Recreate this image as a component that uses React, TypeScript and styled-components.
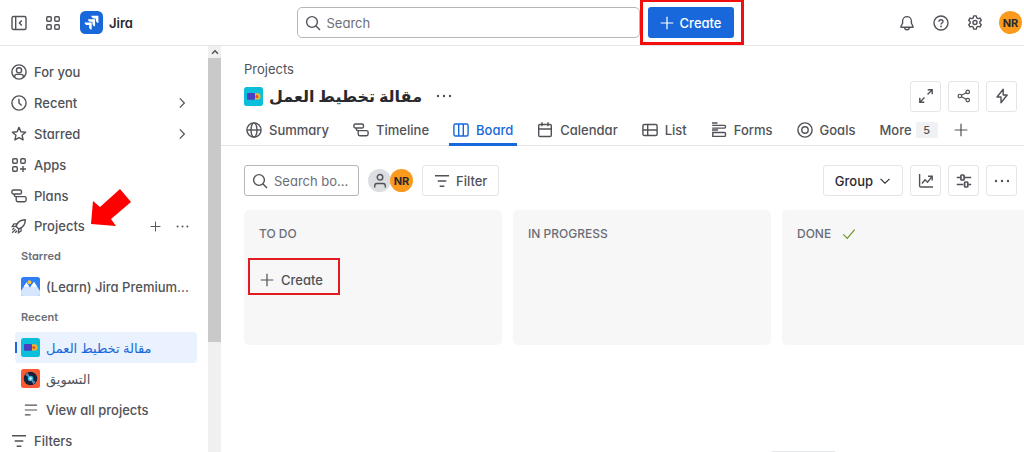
import React from 'react';
import styled, { createGlobalStyle, css } from 'styled-components';

const color = {
  text: '#292a2e',
  subtle: '#505258',
  subtlest: '#6b6e76',
  blue: '#1868db',
  selected: '#e9f2fe',
  border: '#e4e5e8',
  inputBorder: '#b4b6ba',
  sunken: '#f7f7f7',
  orange: '#fb9a1c',
};

const GlobalStyle = createGlobalStyle`
  *, *::before, *::after { box-sizing: border-box; }
  body {
    margin: 0;
    background: #fff;
    color: ${color.subtle};
    font-family: Inter, "Noto Sans", "DejaVu Sans", sans-serif;
    font-feature-settings: "cv11";
    font-size: 13px;
    font-weight: 500;
    line-height: 20px;
  }
  button, input {
    font: inherit;
    font-feature-settings: inherit;
    color: inherit;
  }
  button { cursor: pointer; }
  a { color: inherit; text-decoration: none; }
  ul { list-style: none; margin: 0; padding: 0; }
`;

/* ---------- icons ---------- */

const Glyph = styled.svg<{ $size?: number }>`
  display: block;
  flex: none;
  width: ${(p) => p.$size ?? 16}px;
  height: ${(p) => p.$size ?? 16}px;
  fill: none;
  stroke: currentColor;
  stroke-width: 1.4;
`;

const icons = {
  collapse: (
    <>
      <rect x="1" y="1.5" width="14" height="13" rx="1.5" />
      <path d="M4.700 1.500v13M10.800 5.600 8.400 8l2.400 2.400" />
    </>
  ),
  apps: (
    <>
      <rect x="1.75" y="1.75" width="4.5" height="4.5" rx="1" />
      <rect x="9.75" y="1.75" width="4.5" height="4.5" rx="1" />
      <rect x="1.75" y="9.75" width="4.5" height="4.5" rx="1" />
      <rect x="9.75" y="9.75" width="4.5" height="4.5" rx="1" />
    </>
  ),
  appsAdd: (
    <>
      <rect x="1.75" y="1.75" width="4.5" height="4.5" rx="1" />
      <rect x="9.75" y="1.75" width="4.5" height="4.5" rx="1" />
      <rect x="1.75" y="9.75" width="4.5" height="4.5" rx="1" />
      <path d="M12 9v6M9 12h6" />
    </>
  ),
  search: (
    <>
      <circle cx="7" cy="7" r="5.4" />
      <path d="m11 11 4 4" />
    </>
  ),
  plus: <path d="M8 .8v14.400M.8 8h14.400" />,
  bell: (
    <>
      <path d="M3.6 8.2V6a4.4 4.4 0 0 1 8.8 0v2.2l1.6 3.1v.9H2v-.9z" strokeLinejoin="round" />
      <path d="M5.7 12.4a2.3 2.3 0 0 0 4.6 0" />
    </>
  ),
  help: (
    <>
      <circle cx="8" cy="8" r="7" />
      <path d="M6 6.7C6 5.4 6.9 4.7 8 4.7s2 .75 2 1.8c0 1.4-2 1.5-2 3" />
      <circle cx="8" cy="11.4" r=".9" fill="currentColor" stroke="none" />
    </>
  ),
  gear: (
    <>
      <path
        d="M6.700.9h2.600l.45 2 1.300.75 1.950-.6 1.300 2.250-1.450 1.400v1.600l1.450 1.400-1.300 2.250-1.950-.6-1.300.75-.45 2H6.700l-.45-2-1.300-.75-1.950.6-1.300-2.250 1.450-1.400V6.700L1.700 5.300 3 3.050l1.950.6 1.300-.75z"
        strokeLinejoin="round"
      />
      <circle cx="8" cy="7.500" r="2" />
    </>
  ),
  person: (
    <>
      <circle cx="8" cy="8" r="7.1" />
      <circle cx="8" cy="6.3" r="2.6" />
      <path d="M3.7 13.2v-.7c0-1.3.9-2.1 2.1-2.1h4.4c1.2 0 2.1.8 2.1 2.1v.7" />
    </>
  ),
  user: (
    <>
      <circle cx="8" cy="4.3" r="2.8" />
      <path d="M2.7 14.500v-1.800c0-1.300 1-2.200 2.200-2.200h6.200c1.200 0 2.200.9 2.200 2.200v1.800" />
    </>
  ),
  clock: (
    <>
      <circle cx="8" cy="8" r="7.1" />
      <path d="M8 3.7V8l2.6 2.4" />
    </>
  ),
  star: (
    <path
      d="m8 1.4 1.9 4.3 4.7.5-3.5 3.1 1 4.6L8 11.6l-4.100 2.300 1-4.600L1.400 6.200l4.700-.5z"
      strokeLinejoin="round"
    />
  ),
  plans: (
    <>
      <rect x=".9" y="2" width="9.6" height="4" rx="1.6" />
      <path d="M3.3 6v1.100c0 .8.6 1.500 1.500 1.500h8.700c.9 0 1.600.7 1.600 1.600v1.900c0 .9-.7 1.600-1.600 1.600H6.800c-.9 0-1.600-.7-1.600-1.600V8.600" />
    </>
  ),
  rocket: (
    <>
      <path
        d="M5 8.300C6.300 4.400 9 1.700 14.300 1.700c0 5.300-2.700 8-6.600 9.300z"
        strokeLinejoin="round"
      />
      <path
        d="M6.200 5.900H3L1.200 8.600l3.800-.3M10.100 9.800V13l-2.700 1.800.3-3.800M4.600 11.400l-3.400 3.400M3.300 9.900l-2 2M6.100 12.700l-2 2"
        strokeWidth="1.300"
      />
    </>
  ),
  chevronRight: <path d="m5.5 2.7 5.2 5.3-5.200 5.300" />,
  chevronDown: <path d="M2 5.2 8 11l6-5.800" />,
  dots: (
    <g fill="currentColor" stroke="none">
      <circle cx="2" cy="8" r="1.2" />
      <circle cx="8" cy="8" r="1.2" />
      <circle cx="14" cy="8" r="1.2" />
    </g>
  ),
  viewAll: <path d="M1 2.5h14M1 8h14M1 13.500h6.500" />,
  filter: <path d="M1 2.7h14M3.700 8h8.600M5.700 13.300h4.600" />,
  globe: (
    <>
      <circle cx="8" cy="8" r="7.1" />
      <ellipse cx="8" cy="8" rx="3" ry="7.1" />
      <path d="M1 8h14" />
    </>
  ),
  board: (
    <>
      <rect x=".9" y="2" width="14.2" height="12" rx="1.5" />
      <path d="M5.7 2v12M10.300 2v12" />
    </>
  ),
  calendar: (
    <>
      <rect x="1.7" y="2.5" width="12.6" height="12" rx="1.2" />
      <path d="M1.700 7h12.600M5 .3v4M11 .3v4" />
    </>
  ),
  table: (
    <>
      <rect x=".9" y="2.5" width="14.2" height="11" rx="1.3" />
      <path d="M1 8h14M5.700 2.500v11" />
    </>
  ),
  forms: (
    <>
      <path d="M1 1h5.500M1 8h6" />
      <path d="M1.200 3.400h12.300c.6 0 1 .4 1 1v.7c0 .6-.4 1-1 1H1.200" />
      <path d="M1.800 10.500h11.700c.6 0 1 .4 1 1v1.900c0 .6-.4 1-1 1H1.800z" />
    </>
  ),
  goals: (
    <>
      <circle cx="8" cy="8" r="7.1" />
      <circle cx="8" cy="8" r="3.2" />
    </>
  ),
  expand: (
    <path d="M9.500 6.500 14 2M9.700 1.800h4.500v4.500M6.500 9.500 2 14M1.800 9.700v4.500h4.500" />
  ),
  share: (
    <>
      <circle cx="3.3" cy="8" r="2" />
      <circle cx="12.3" cy="3.4" r="2" />
      <circle cx="12.3" cy="12.6" r="2" />
      <path d="m5.100 7.100 5.400-2.800M5.100 8.900l5.400 2.800" />
    </>
  ),
  bolt: (
    <path
      d="M9.200 1.300 3 9h4v5.700L13.200 7h-4z"
      strokeLinejoin="round"
    />
  ),
  chart: (
    <path d="M1.600 1v11.700c0 .8.500 1.300 1.300 1.300H15M4 10.500l3-3.700 2.600 2.400 4.200-5.600M10 3.200h4.200v4.200" />
  ),
  sliders: (
    <g strokeWidth="1.700">
      <path d="M.8 4.500h3.500M9 4.500h6.200M.8 11.500h6.500M12.200 11.500h3" />
      <rect x="4.900" y="2" width="3.200" height="5" rx=".8" />
      <rect x="8.600" y="9" width="3.200" height="5" rx=".8" />
    </g>
  ),
  check: <path d="M1.500 8.500 6 13 14.500 3" />,
};

function Icon({ name, size }: { name: keyof typeof icons; size?: number }) {
  return (
    <Glyph viewBox="0 0 16 16" $size={size} aria-hidden="true">
      {icons[name]}
    </Glyph>
  );
}

const Picture = styled.svg<{ $size: number }>`
  display: block;
  flex: none;
  width: ${(p) => p.$size}px;
  height: ${(p) => p.$size}px;
`;

const JiraLogo = () => (
  <Picture $size={23} viewBox="0 0 24 24" aria-hidden="true">
    <rect width="24" height="24" rx="5.5" fill={color.blue} />
    <g fill="#fff">
      <path d="M11.800 5h7.400v7.400c-1.500 0-2.700-1.200-2.700-2.700V7.700h-2c-1.500 0-2.700-1.200-2.700-2.700z" />
      <path d="M8.300 8.500h7.400v7.400c-1.500 0-2.700-1.200-2.700-2.700v-2h-2c-1.500 0-2.700-1.200-2.700-2.700z" />
      <path d="M4.800 12h7.400v7.400c-1.500 0-2.700-1.200-2.700-2.700v-2h-2c-1.500 0-2.700-1.200-2.700-2.700z" />
    </g>
  </Picture>
);

const WalletAvatar = () => (
  <Picture $size={19} viewBox="0 0 19 19" aria-hidden="true">
    <rect width="19" height="19" rx="2.5" fill="#0bbfda" />
    <path d="M10 6.300h3.500a3 3 0 0 1 3 3 3 3 0 0 1-3 3.200H10z" fill="#f7b32b" />
    <rect x="3" y="6" width="8" height="6.700" rx=".8" fill="#4a3fc0" />
    <circle cx="12.900" cy="9.400" r="1.500" fill="#d9532c" />
  </Picture>
);

const RecordAvatar = () => (
  <Picture $size={19} viewBox="0 0 19 19" aria-hidden="true">
    <rect width="19" height="19" rx="2.5" fill="#fb5a35" />
    <circle cx="9.5" cy="9.5" r="6.8" fill="#14213a" />
    <path d="M9.500 9.500 4.300 6a6.300 6.300 0 0 1 2.500-2.200zM9.500 9.500l5.200 3.500a6.300 6.300 0 0 1-2.500 2.200z" fill="#5f8bb0" />
    <circle cx="9.5" cy="9.5" r="2.8" fill="#29b6e0" />
    <circle cx="9.5" cy="9.5" r="1.200" fill="#fff" />
  </Picture>
);

const MountainAvatar = () => (
  <Picture $size={19} viewBox="0 0 19 19" aria-hidden="true">
    <rect width="19" height="19" rx="2.5" fill="#2f80f5" />
    <circle cx="8.5" cy="5.2" r="1.9" fill="#ffc83d" />
    <path d="M0 14 5.500 5.500l3.300 5 4.200-5.500 6 9v2.500a2.500 2.500 0 0 1-2.500 2.500h-14A2.500 2.500 0 0 1 0 16.500z" fill="#d6e6fe" />
    <path d="m5.500 5.500 2.300 3.500-1.300 1-1.200-1-1.700 1-.6-.7zM13 5l2.800 4.200-1.400.9-1.500-1-1.400 1.100-1.300-1.300z" fill="#fff" />
  </Picture>
);

const Arrow = styled.svg`
  position: absolute;
  left: 80px;
  top: -22px;
  width: 40px;
  height: 38px;
  fill: #fe0000;
`;

/* ---------- shared controls ---------- */

const IconButton = styled.button<{ $boxed?: boolean; $small?: boolean }>`
  display: flex;
  align-items: center;
  justify-content: center;
  flex: none;
  width: ${(p) => (p.$small ? 24 : p.$boxed ? 31 : 30)}px;
  height: ${(p) => (p.$small ? 24 : p.$boxed ? 31 : 30)}px;
  padding: 0;
  border: ${(p) => (p.$boxed ? `1px solid ${color.border}` : '0')};
  border-radius: 3px;
  background: none;
`;

const LabelButton = styled.button<{ $strong?: boolean }>`
  display: flex;
  align-items: center;
  gap: 6px;
  height: 31px;
  padding: 0 11px;
  border: 1px solid ${color.border};
  border-radius: 3px;
  background: none;
  color: ${(p) => (p.$strong ? color.text : color.subtle)};
`;

const Avatar = styled.span<{ $empty?: boolean }>`
  display: flex;
  align-items: center;
  justify-content: center;
  flex: none;
  width: 23px;
  height: 23px;
  border-radius: 50%;
  background: ${(p) => (p.$empty ? '#dddee1' : color.orange)};
  color: ${(p) => (p.$empty ? color.subtle : color.text)};
  font-size: 11px;
  font-weight: 700;
`;

const Highlight = styled.div<{ $header?: boolean }>`
  position: absolute;
  pointer-events: none;
  ${(p) =>
    p.$header
      ? css`
          inset: -8px -10px -7px -8px;
          border: 3px solid #f20d0d;
        `
      : css`
          inset: -6px -17px 0 -12px;
          border: 2px solid #e01b22;
        `}
`;

/* ---------- header ---------- */

const Page = styled.div`
  display: flex;
  flex-direction: column;
  height: 100vh;
  overflow: hidden;
`;

const Header = styled.header`
  display: flex;
  align-items: center;
  flex: none;
  height: 46px;
  padding: 0 2px 0 4px;
  border-bottom: 1px solid ${color.border};
`;

const HeaderSide = styled.div<{ $end?: boolean }>`
  display: flex;
  align-items: center;
  flex: 1;
  gap: 4px;
  justify-content: ${(p) => (p.$end ? 'flex-end' : 'flex-start')};
`;

const Brand = styled.a`
  display: flex;
  align-items: center;
  gap: 6px;
  margin-left: 8px;
  color: ${color.text};
  font-weight: 600;
`;

const AccountButton = styled.button`
  margin-left: 5px;
  padding: 0;
  border: 0;
  background: none;
`;

const HeaderCenter = styled.div`
  display: flex;
  align-items: center;
  gap: 8px;
  flex: 0 1 437px;
  margin-left: 4px;
`;

const SearchBox = styled.label<{ $compact?: boolean }>`
  display: flex;
  align-items: center;
  gap: 6px;
  flex: ${(p) => (p.$compact ? '0 0 115px' : '1')};
  min-width: 0;
  height: 31px;
  padding: 0 7px;
  border: 1px solid ${color.inputBorder};
  border-radius: ${(p) => (p.$compact ? 3 : 5)}px;

  input {
    flex: 1;
    min-width: 0;
    padding: 0;
    border: 0;
    outline: 0;
    background: none;
    font-weight: 400;
  }
  input::placeholder {
    color: ${color.subtlest};
    opacity: 1;
  }
`;

const CreateWrap = styled.div`
  position: relative;
  flex: none;
`;

const CreateButton = styled.button`
  display: flex;
  align-items: center;
  gap: 6px;
  height: 31px;
  padding: 0 12px;
  border: 0;
  border-radius: 3px;
  background: ${color.blue};
  color: #fff;
`;

/* ---------- sidebar ---------- */

const Body = styled.div`
  display: flex;
  flex: 1;
  min-height: 0;
`;

const Sidebar = styled.nav`
  flex: 0 0 208px;
  padding: 10px 11px 0;
  overflow: hidden;
`;

const NavRow = styled.li<{ $short?: boolean }>`
  position: relative;
  display: flex;
  align-items: center;
  height: ${(p) => (p.$short ? 30 : 31)}px;
  padding-right: 3px;
`;

const NavLink = styled.a`
  display: flex;
  align-items: center;
  flex: 1;
  gap: 7px;
`;

const RowActions = styled.div`
  display: flex;
  gap: 3px;
`;

const SubHeading = styled.h2`
  margin: 0;
  padding-left: 10px;
  font-size: 11px;
  font-weight: 600;
  line-height: 30px;
  color: ${color.subtlest};
`;

const SubRow = styled.li<{ $selected?: boolean }>`
  position: relative;
  display: flex;
  align-items: center;
  height: 31px;
  margin-left: 4px;
  padding-left: 6px;
  border-radius: 4px;
  ${(p) =>
    p.$selected &&
    css`
      background: ${color.selected};
      color: ${color.blue};
      &::before {
        content: '';
        position: absolute;
        left: 0;
        top: 10px;
        width: 2px;
        height: 11px;
        background: ${color.blue};
      }
    `}
`;

const SubLink = styled.a`
  display: flex;
  align-items: center;
  gap: 6px;
  white-space: nowrap;
`;

const SubIcon = styled.span`
  display: flex;
  justify-content: center;
  width: 19px;
`;

const ScrollTrack = styled.div`
  display: flex;
  flex-direction: column;
  flex: 0 0 13px;
  background: #f0f0f0;
`;

const ScrollCap = styled.div`
  display: flex;
  align-items: center;
  justify-content: center;
  flex: 0 0 12px;
`;

const ScrollThumb = styled.div`
  height: 70%;
  background: #c9c9c9;
`;

/* ---------- main ---------- */

const Main = styled.main`
  position: relative;
  display: flex;
  flex-direction: column;
  flex: 1;
  min-width: 0;
  padding-top: 13px;
  overflow: hidden;
`;

const Crumb = styled.a`
  padding-left: 23px;
  font-weight: 400;
`;

const TitleRow = styled.div`
  display: flex;
  align-items: center;
  gap: 6px;
  height: 34px;
  padding: 0 7px 0 23px;
`;

const Title = styled.h1`
  margin: 0 4px 0 0;
  color: ${color.text};
  font-size: 16px;
  font-weight: 700;
  line-height: 24px;
`;

const Actions = styled.div`
  display: flex;
  gap: 7px;
  margin-left: auto;
`;

const Tabs = styled.nav`
  display: flex;
  gap: 16px;
  padding-left: 21px;
  margin-top: 1px;
  border-bottom: 1px solid ${color.border};
`;

const Tab = styled.a<{ $active?: boolean }>`
  display: flex;
  align-items: center;
  gap: 7px;
  height: 32px;
  margin-bottom: -1px;
  padding: 2px 4px 0;
  border-bottom: 3px solid ${(p) => (p.$active ? color.blue : 'transparent')};
  color: ${(p) => (p.$active ? color.blue : 'inherit')};
`;

const MoreTab = styled.button`
  display: flex;
  align-items: center;
  gap: 4px;
  height: 31px;
  padding: 0 0 0 4px;
  border: 0;
  background: none;
`;

const Count = styled.span`
  width: 22px;
  border-radius: 2px;
  background: #f0f1f2;
  font-size: 11px;
  line-height: 16px;
  text-align: center;
`;

const AddTab = styled.button`
  display: flex;
  align-items: center;
  height: 31px;
  padding: 0;
  border: 0;
  background: none;
`;

const Toolbar = styled.div`
  display: flex;
  align-items: center;
  gap: 9px;
  padding: 19px 7px 14px 23px;
`;

const Avatars = styled.div`
  display: flex;
  & > :last-child {
    margin-left: -1px;
  }
`;

const Columns = styled.div`
  display: flex;
  gap: 11px;
  padding-left: 23px;
`;

const Column = styled.section`
  flex: 0 0 258px;
  height: 135px;
  padding: 14px 15px;
  border-radius: 5px;
  background: ${color.sunken};
`;

const ColumnTitle = styled.h2`
  display: flex;
  align-items: center;
  gap: 11px;
  margin: 0;
  color: ${color.subtlest};
  font-size: 12px;
  font-weight: 500;
  line-height: 20px;

  svg {
    color: #6a9a23;
  }
`;

const CardCreate = styled.div`
  position: relative;
  width: fit-content;
  margin: 20px 0 0 1px;
`;

const CardCreateButton = styled.button`
  display: flex;
  align-items: center;
  gap: 7px;
  height: 31px;
  padding: 0;
  border: 0;
  background: none;
`;

const BoardHandle = styled.div`
  position: absolute;
  right: 187px;
  bottom: -29px;
  width: 67px;
  height: 30px;
  border: 1px solid ${color.border};
  border-radius: 3px;
`;

const tabs: { icon: keyof typeof icons; label: string; active?: boolean }[] = [
  { icon: 'globe', label: 'Summary' },
  { icon: 'plans', label: 'Timeline' },
  { icon: 'board', label: 'Board', active: true },
  { icon: 'calendar', label: 'Calendar' },
  { icon: 'table', label: 'List' },
  { icon: 'forms', label: 'Forms' },
  { icon: 'goals', label: 'Goals' },
];

const navItems: { icon: keyof typeof icons; label: string; expandable?: boolean }[] = [
  { icon: 'person', label: 'For you' },
  { icon: 'clock', label: 'Recent', expandable: true },
  { icon: 'star', label: 'Starred', expandable: true },
  { icon: 'appsAdd', label: 'Apps' },
  { icon: 'plans', label: 'Plans' },
];

export default function App() {
  return (
    <Page>
      <GlobalStyle />
      <Header>
        <HeaderSide>
          <IconButton aria-label="Collapse sidebar">
            <Icon name="collapse" />
          </IconButton>
          <IconButton aria-label="Switch apps">
            <Icon name="apps" />
          </IconButton>
          <Brand href="#">
            <JiraLogo />
            Jira
          </Brand>
        </HeaderSide>
        <HeaderCenter>
          <SearchBox>
            <Icon name="search" />
            <input type="text" placeholder="Search" aria-label="Search" />
          </SearchBox>
          <CreateWrap>
            <CreateButton>
              <Icon name="plus" size={14} />
              Create
            </CreateButton>
            <Highlight $header />
          </CreateWrap>
        </HeaderCenter>
        <HeaderSide $end>
          <IconButton aria-label="Notifications">
            <Icon name="bell" />
          </IconButton>
          <IconButton aria-label="Help">
            <Icon name="help" />
          </IconButton>
          <IconButton aria-label="Settings">
            <Icon name="gear" />
          </IconButton>
          <AccountButton aria-label="Account">
            <Avatar>NR</Avatar>
          </AccountButton>
        </HeaderSide>
      </Header>

      <Body>
        <Sidebar aria-label="Sidebar">
          <ul>
            {navItems.map((item) => (
              <NavRow key={item.label}>
                <NavLink href="#">
                  <Icon name={item.icon} />
                  {item.label}
                </NavLink>
                {item.expandable && (
                  <IconButton $small aria-label={`Expand ${item.label}`}>
                    <Icon name="chevronRight" size={14} />
                  </IconButton>
                )}
              </NavRow>
            ))}
            <NavRow $short>
              <NavLink href="#">
                <Icon name="rocket" />
                Projects
              </NavLink>
              <RowActions>
                <IconButton $small aria-label="Create project">
                  <Icon name="plus" size={11} />
                </IconButton>
                <IconButton $small aria-label="More project actions">
                  <Icon name="dots" size={13} />
                </IconButton>
              </RowActions>
              <Arrow viewBox="0 0 40 38" aria-hidden="true">
                <path d="M0 35 2 12l7 6L29 0l11 13-20 17 5 7z" />
              </Arrow>
            </NavRow>
          </ul>
          <SubHeading>Starred</SubHeading>
          <ul>
            <SubRow>
              <SubLink href="#">
                <MountainAvatar />
                (Learn) Jira Premium...
              </SubLink>
            </SubRow>
          </ul>
          <SubHeading>Recent</SubHeading>
          <ul>
            <SubRow $selected>
              <SubLink href="#">
                <WalletAvatar />
                <span lang="ar">مقالة تخطيط العمل</span>
              </SubLink>
            </SubRow>
            <SubRow>
              <SubLink href="#">
                <RecordAvatar />
                <span lang="ar">التسويق</span>
              </SubLink>
            </SubRow>
            <SubRow>
              <SubLink href="#">
                <SubIcon>
                  <Icon name="viewAll" size={14} />
                </SubIcon>
                View all projects
              </SubLink>
            </SubRow>
            <NavRow>
              <NavLink href="#">
                <Icon name="filter" />
                Filters
              </NavLink>
            </NavRow>
          </ul>
        </Sidebar>
        <ScrollTrack aria-hidden="true">
          <ScrollCap>
            <Glyph viewBox="0 0 16 16" $size={8}>
              <path d="M2 11.500 8 5.500l6 6" strokeWidth="3" />
            </Glyph>
          </ScrollCap>
          <ScrollThumb />
        </ScrollTrack>

        <Main>
          <Crumb href="#">Projects</Crumb>
          <TitleRow>
            <WalletAvatar />
            <Title lang="ar">مقالة تخطيط العمل</Title>
            <IconButton $small aria-label="More actions">
              <Icon name="dots" />
            </IconButton>
            <Actions>
              <IconButton $boxed aria-label="Enter full screen">
                <Icon name="expand" />
              </IconButton>
              <IconButton $boxed aria-label="Share">
                <Icon name="share" size={14} />
              </IconButton>
              <IconButton $boxed aria-label="Automation">
                <Icon name="bolt" />
              </IconButton>
            </Actions>
          </TitleRow>
          <Tabs aria-label="Views">
            {tabs.map((tab) => (
              <Tab key={tab.label} href="#" $active={tab.active}>
                <Icon name={tab.icon} />
                {tab.label}
              </Tab>
            ))}
            <MoreTab>
              More
              <Count>5</Count>
            </MoreTab>
            <AddTab aria-label="Add view">
              <Icon name="plus" size={14} />
            </AddTab>
          </Tabs>
          <Toolbar>
            <SearchBox $compact>
              <Icon name="search" />
              <input type="text" placeholder="Search bo..." aria-label="Search board" />
            </SearchBox>
            <Avatars>
              <Avatar $empty>
                <Icon name="user" />
              </Avatar>
              <Avatar>NR</Avatar>
            </Avatars>
            <LabelButton>
              <Icon name="filter" />
              Filter
            </LabelButton>
            <Actions>
              <LabelButton $strong>
                Group
                <Icon name="chevronDown" size={12} />
              </LabelButton>
              <IconButton $boxed aria-label="Insights">
                <Icon name="chart" />
              </IconButton>
              <IconButton $boxed aria-label="View settings">
                <Icon name="sliders" />
              </IconButton>
              <IconButton $boxed aria-label="More">
                <Icon name="dots" />
              </IconButton>
            </Actions>
          </Toolbar>
          <Columns>
            <Column>
              <ColumnTitle>TO DO</ColumnTitle>
              <CardCreate>
                <CardCreateButton>
                  <Icon name="plus" size={14} />
                  Create
                </CardCreateButton>
                <Highlight />
              </CardCreate>
            </Column>
            <Column>
              <ColumnTitle>IN PROGRESS</ColumnTitle>
            </Column>
            <Column>
              <ColumnTitle>
                DONE
                <Icon name="check" size={14} />
              </ColumnTitle>
            </Column>
          </Columns>
          <BoardHandle />
        </Main>
      </Body>
    </Page>
  );
}
